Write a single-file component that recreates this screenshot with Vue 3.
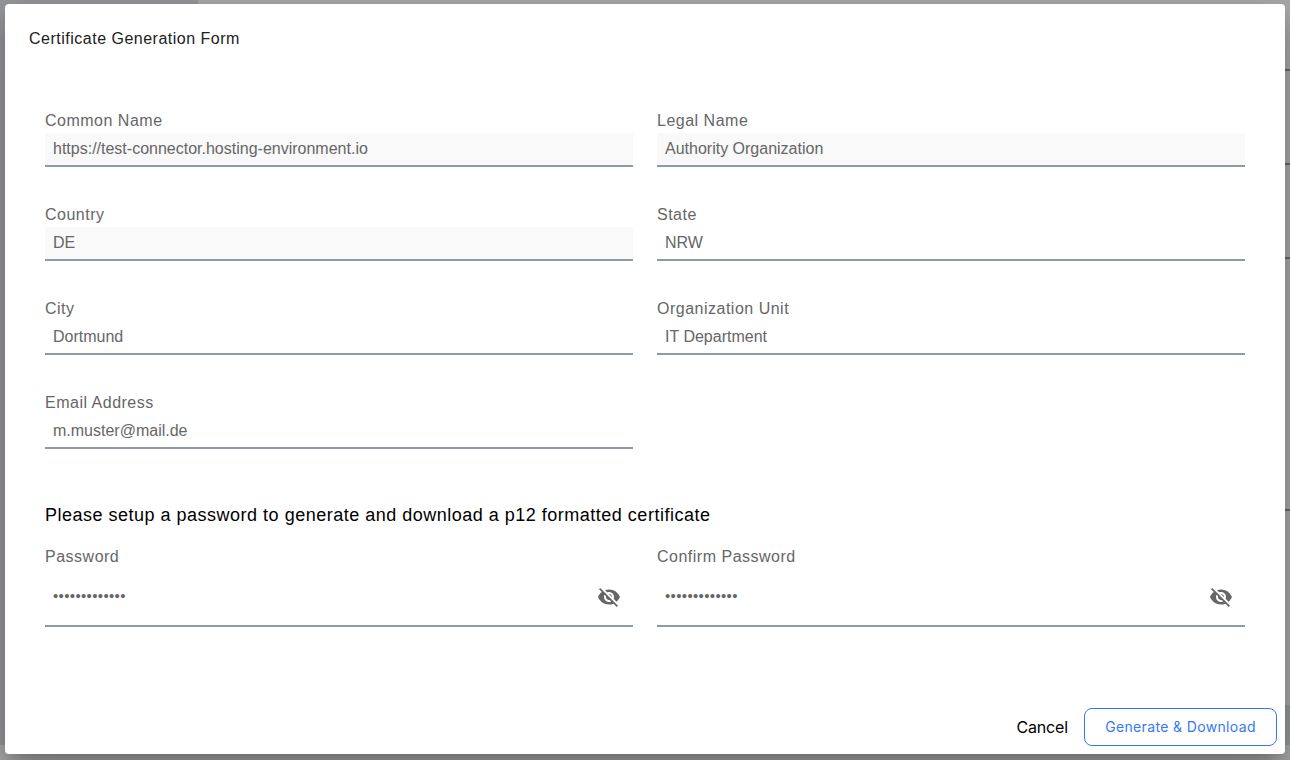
<script setup>
const fields = [
  { label: 'Common Name', value: 'https://test-connector.hosting-environment.io', readonly: true },
  { label: 'Legal Name', value: 'Authority Organization', readonly: true },
  { label: 'Country', value: 'DE', readonly: true },
  { label: 'State', value: 'NRW' },
  { label: 'City', value: 'Dortmund' },
  { label: 'Organization Unit', value: 'IT Department' },
  { label: 'Email Address', value: 'm.muster@mail.de' },
]
const passwords = ['Password', 'Confirm Password']
</script>

<template>
  <div class="screen">
    <div class="side"></div>
    <div class="edge">
      <i class="rule r1"></i><i class="rule r2"></i><i class="rule r3"></i><i class="rule r4"></i>
      <i class="band"></i>
    </div>
    <section class="dialog">
      <h1>Certificate Generation Form</h1>
      <div class="grid">
        <div v-for="f in fields" :key="f.label" class="field">
          <label>{{ f.label }}</label>
          <div class="value" :class="{ readonly: f.readonly }">{{ f.value }}</div>
        </div>
      </div>
      <h2>Please setup a password to generate and download a p12 formatted certificate</h2>
      <div class="grid">
        <div v-for="p in passwords" :key="p" class="field">
          <label>{{ p }}</label>
          <div class="secret">
            <span class="dots">•••••••••••••</span>
            <svg width="24" height="24" viewBox="0 0 24 24">
              <path d="M12 7c2.76 0 5 2.24 5 5 0 .65-.13 1.26-.36 1.83l2.92 2.92c1.51-1.26 2.7-2.89 3.43-4.75-1.73-4.39-6-7.5-11-7.5-1.4 0-2.74.25-3.98.7l2.16 2.16C10.74 7.13 11.35 7 12 7zM2 4.27l2.28 2.28.46.46C3.08 8.3 1.78 10.02 1 12c1.73 4.39 6 7.5 11 7.5 1.55 0 3.03-.3 4.38-.84l.42.42L19.73 22 21 20.73 3.27 3 2 4.27zM7.53 9.8l1.55 1.55c-.05.21-.08.43-.08.65 0 1.66 1.34 3 3 3 .22 0 .44-.03.65-.08l1.55 1.55c-.67.33-1.41.53-2.2.53-2.76 0-5-2.24-5-5 0-.79.2-1.53.53-2.2zm4.31-.78l3.15 3.15.02-.16c0-1.66-1.34-3-3-3l-.17.01z" />
            </svg>
          </div>
        </div>
      </div>
      <footer>
        <button class="cancel">Cancel</button>
        <button class="primary">Generate &amp; Download</button>
      </footer>
    </section>
  </div>
</template>

<style>
body { overflow: hidden; }
</style>

<style scoped>
* { box-sizing: border-box; margin: 0; }
.screen {
  position: relative;
  width: 1290px;
  height: 760px;
  padding: 4px 5px 6px;
  overflow: hidden;
  background: #aaaaaa;
  font-family: "Liberation Sans", Arial, sans-serif;
  font-size: 16px;
}
.side { position: absolute; left: 0; top: 0; width: 198px; height: 745px; background: #96989c; }
.edge { position: absolute; right: 0; top: 0; width: 5px; height: 760px; }
.rule { position: absolute; left: 0; width: 5px; height: 2px; background: #626772; }
.r1 { top: 69px; }
.r2 { top: 163px; }
.r3 { top: 257px; }
.r4 { top: 509px; }
.band { position: absolute; left: 0; top: 705px; width: 5px; height: 40px; background: #96989c; }
.dialog {
  position: relative;
  display: flex;
  flex-direction: column;
  height: 750px;
  padding: 25px 8px 8px;
  border-radius: 4px;
  background: #fff;
  box-shadow: 0 11px 15px -7px rgba(0, 0, 0, .2), 0 24px 38px 3px rgba(0, 0, 0, .14), 0 9px 46px 8px rgba(0, 0, 0, .12);
}
h1 {
  padding-left: 16px;
  font-size: 16px;
  font-weight: 400;
  line-height: 20px;
  letter-spacing: .5px;
  color: #212121;
  margin-bottom: 59px;
}
.grid {
  display: grid;
  grid-template-columns: 1fr 1fr;
  column-gap: 24px;
  row-gap: 36px;
  margin: 0 32px;
}
label {
  display: block;
  height: 25px;
  line-height: 25px;
  letter-spacing: .5px;
  color: #666;
}
.value {
  height: 34px;
  padding: 0 8px;
  border-bottom: 2px solid #9099a8;
  line-height: 31px;
  color: #666;
}
.field { height: 58px; }
.value.readonly { background: #f9f9f9; }
h2 {
  margin: 57px 32px 19px;
  font-size: 18px;
  font-weight: 400;
  line-height: 20px;
  letter-spacing: .5px;
  color: #000;
  white-space: nowrap;
}
.secret {
  display: flex;
  align-items: center;
  justify-content: space-between;
  height: 58px;
  padding: 0 12px 0 8px;
  border-bottom: 2px solid #9099a8;
  color: #666;
}
.dots { padding-bottom: 4px; font-size: 15px; letter-spacing: .35px; }
svg { fill: #666; }
footer {
  display: flex;
  justify-content: flex-end;
  align-items: center;
  gap: 16px;
  margin-top: auto;
}
button { padding: 0; border: 0; background: none; font-family: Inter, sans-serif; }
.cancel { font-size: 16px; letter-spacing: -.15px; color: #000; }
.primary {
  width: 193px;
  height: 38px;
  padding-bottom: 2px;
  border: 1px solid #3478f6;
  border-radius: 8px;
  font-size: 14px;
  letter-spacing: .35px;
  color: #3478f6;
}
</style>
